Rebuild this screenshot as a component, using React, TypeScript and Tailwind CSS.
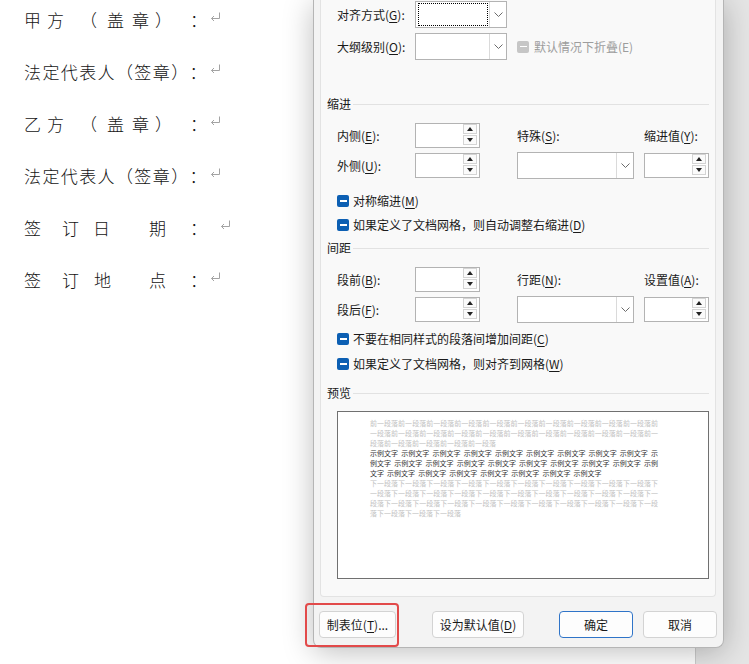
import React from "react";

const CJK = "font-['Noto_Sans_CJK_SC','Noto_Sans',sans-serif]";

function U({ children }: { children: React.ReactNode }) {
  return <span className="underline underline-offset-[2px] decoration-[1px]">{children}</span>;
}

function Ret({ className = "" }: { className?: string }) {
  return (
    <svg width="11" height="10" viewBox="0 0 11 10" className={`shrink-0 ${className}`}>
      <path d="M9.5 0.5 V6.5 H1.5" fill="none" stroke="#a3a3a3" strokeWidth="1" />
      <path d="M4 4 L1.5 6.5 L4 9" fill="none" stroke="#a3a3a3" strokeWidth="1" />
    </svg>
  );
}

function Chevron() {
  return (
    <svg width="9" height="5" viewBox="0 0 9 5">
      <path d="M0.5 0.5 L4.5 4.5 L8.5 0.5" fill="none" stroke="#6b6b6b" strokeWidth="1" />
    </svg>
  );
}

function Tri({ up }: { up?: boolean }) {
  return (
    <svg width="6" height="4" viewBox="0 0 6 4">
      {up ? <path d="M0 4 L3 0 L6 4Z" fill="#222" /> : <path d="M0 0 L3 4 L6 0Z" fill="#222" />}
    </svg>
  );
}

function Select({ w, focus }: { w: string; focus?: boolean }) {
  return (
    <div className={`flex shrink-0 h-[27px] ${w} border border-[#b3b3b3] bg-white`}>
      <div className="flex-1 pl-[2px] pr-[1px] py-[1px]">
        {focus && <div className="h-full border border-dotted border-black" />}
      </div>
      <div className="w-[17px] border-l border-[#dadada] flex items-center justify-center">
        <Chevron />
      </div>
    </div>
  );
}

function Spin() {
  return (
    <div className="flex shrink-0 h-[25px] w-[65px] border border-[#b3b3b3] bg-white">
      <div className="flex-1" />
      <div className="flex flex-col w-[14px] mr-[2px] mb-[2px] gap-[1px]">
        <div className="flex-1 border border-[#d4d4d4] bg-[#fbfbfb] flex items-center justify-center">
          <Tri up />
        </div>
        <div className="flex-1 border border-[#d4d4d4] bg-[#fbfbfb] flex items-center justify-center">
          <Tri />
        </div>
      </div>
    </div>
  );
}

function Check({ disabled }: { disabled?: boolean }) {
  return (
    <div
      className={`w-[12px] h-[12px] shrink-0 rounded-[2px] flex items-center justify-center ${
        disabled ? "bg-[#c6c6c6]" : "bg-[#0c5fb3]"
      }`}
    >
      <div className="w-[7px] h-[1.5px] bg-white" />
    </div>
  );
}

function Section({ title, mt }: { title: string; mt: string }) {
  return (
    <div className={`flex items-center h-[16px] ${mt}`}>
      <span>{title}</span>
      <div className="ml-[2px] flex-1 h-px bg-[#e2e2e2]" />
    </div>
  );
}

function CheckRow({ mt, children }: { mt: string; children: React.ReactNode }) {
  return (
    <div className={`flex items-center h-[16px] pl-[10px] gap-[4px] ${mt}`}>
      <Check />
      <span>{children}</span>
    </div>
  );
}

function Label({ children }: { children: React.ReactNode }) {
  return <div className="w-[88px] shrink-0 pl-[10px]">{children}</div>;
}

function Btn({ w, primary, children, ml = "" }: { w: string; primary?: boolean; children: React.ReactNode; ml?: string }) {
  return (
    <div
      className={`h-[27px] shrink-0 ${w} ${ml} rounded-[4px] border ${
        primary ? "border-[#2f74c8]" : "border-[#d3d3d3]"
      } bg-[#fdfdfd] flex items-center justify-center text-[12px] text-[#1a1a1a]`}
    >
      {children}
    </div>
  );
}

const prev = [
  "前一段落".repeat(10) + "前",
  "一段落前".repeat(10) + "一",
  "段落" + "前一段落".repeat(4),
];
const sample = [
  "示例文字 ".repeat(9) + "示",
  "例文字 " + "示例文字 ".repeat(8) + "示例",
  "文字 " + "示例文字 ".repeat(6) + "示例文字",
];
const next = [
  "下一段落".repeat(10) + "下",
  "一段落下".repeat(10) + "一",
  "段落下一".repeat(10) + "段",
  "落" + "下一段落".repeat(3),
];

function Preview() {
  return (
    <div className="ml-[10px] mt-[10px] w-[372px] h-[168px] border border-[#707070] bg-white pt-[6px] pl-[32px] text-[7px] leading-[10px]">
      {prev.map((t, i) => (
        <div
          key={"p" + i}
          className={`w-[288px] whitespace-nowrap text-[#c2c2c2] ${i < 2 ? "[text-align-last:justify] text-justify" : ""}`}
        >
          {t}
        </div>
      ))}
      {sample.map((t, i) => (
        <div
          key={"s" + i}
          className={`w-[288px] whitespace-nowrap text-[#333333] [word-spacing:1.5px] ${
            i < 2 ? "[text-align-last:justify] text-justify" : ""
          }`}
        >
          {t}
        </div>
      ))}
      {next.map((t, i) => (
        <div
          key={"n" + i}
          className={`w-[288px] whitespace-nowrap text-[#c2c2c2] ${i < 3 ? "[text-align-last:justify] text-justify" : ""}`}
        >
          {t}
        </div>
      ))}
    </div>
  );
}

function Ch({ c, ml = "" }: { c: string; ml?: string }) {
  return <span className={`inline-block shrink-0 w-[17px] text-center ${ml}`}>{c}</span>;
}

function Cw({ c }: { c: string }) {
  return <span className="inline-block shrink-0 w-[18.4px] text-left">{c}</span>;
}

function DocText() {
  return (
    <div className={`${CJK} text-[17px] text-[#141414] font-light pt-[4px] pl-[24px] flex flex-col gap-[20px]`}>
      <div className="flex items-center h-[32px]">
        <Ch c="甲" />
        <Ch c="方" ml="ml-[6px]" />
        <Ch c="（" ml="ml-[16px]" />
        <Ch c="盖" ml="ml-[10px]" />
        <Ch c="章" ml="ml-[8px]" />
        <Ch c="）" ml="ml-[6px]" />
        <Ch c="：" ml="ml-[18px]" />
        <Ret className="ml-[3px] -mt-[6px]" />
      </div>
      <div className="flex items-center h-[32px]">
        {"法定代表人（签章）：".split("").map((c, i) => (
          <Cw key={i} c={c} />
        ))}
        <Ret className="ml-[2px] -mt-[6px]" />
      </div>
      <div className="flex items-center h-[32px]">
        <Ch c="乙" />
        <Ch c="方" ml="ml-[6px]" />
        <Ch c="（" ml="ml-[16px]" />
        <Ch c="盖" ml="ml-[10px]" />
        <Ch c="章" ml="ml-[8px]" />
        <Ch c="）" ml="ml-[6px]" />
        <Ch c="：" ml="ml-[18px]" />
        <Ret className="ml-[3px] -mt-[6px]" />
      </div>
      <div className="flex items-center h-[32px]">
        {"法定代表人（签章）：".split("").map((c, i) => (
          <Cw key={i} c={c} />
        ))}
        <Ret className="ml-[2px] -mt-[6px]" />
      </div>
      <div className="flex items-center h-[32px]">
        <Ch c="签" />
        <Ch c="订" ml="ml-[21px]" />
        <Ch c="日" ml="ml-[14px]" />
        <Ch c="期" ml="ml-[39px]" />
        <Ch c="：" ml="ml-[24px]" />
        <Ret className="ml-[13px] -mt-[6px]" />
      </div>
      <div className="flex items-center h-[32px]">
        <Ch c="签" />
        <Ch c="订" ml="ml-[21px]" />
        <Ch c="地" ml="ml-[15px]" />
        <Ch c="点" ml="ml-[38px]" />
        <Ch c="：" ml="ml-[24px]" />
        <Ret className="ml-[3px] -mt-[6px]" />
      </div>
    </div>
  );
}

export default function App() {
  return (
    <div className="relative w-[749px] h-[664px] overflow-hidden flex bg-white">
      <div className="w-[695px] h-full bg-white">
        <DocText />
      </div>
      <div className="flex-1 h-full bg-[#e5e5e5] border-l border-[#cdcdcd]" />

      {/* dialog window */}
      <div
        className={`${CJK} absolute left-[313px] top-0 w-[411px] h-[648px] bg-[#f3f3f3] border-x border-b border-[#b5b5b5] rounded-b-[8px] shadow-[0_4px_30px_rgba(0,0,0,0.26)] pl-[6px] pr-[7px] text-[12px] text-[#1a1a1a] flex flex-col`}
      >
        <div className="h-[597px] border-x border-b border-[#e3e3e3] bg-[#f9f9f9] rounded-b-[4px] pl-[6px] pr-[6px] flex flex-col">
          <div className="flex items-center h-[27px] mt-[1px]">
            <Label>
              对齐方式(<U>G</U>):
            </Label>
            <Select w="w-[92px]" focus />
          </div>
          <div className="flex items-center h-[27px] mt-[5px]">
            <Label>
              大纲级别(<U>O</U>):
            </Label>
            <Select w="w-[92px]" />
            <div className="ml-[10px] flex items-center gap-[5px] text-[#9d9d9d]">
              <Check disabled />
              <span>默认情况下折叠(E)</span>
            </div>
          </div>

          <Section title="缩进" mt="mt-[36px]" />
          <div className="flex items-center h-[25px] mt-[11px]">
            <Label>
              内侧(<U>E</U>):
            </Label>
            <Spin />
            <div className="w-[37px] shrink-0" />
            <div className="w-[127px] shrink-0">
              特殊(<U>S</U>):
            </div>
            <div>
              缩进值(<U>Y</U>):
            </div>
          </div>
          <div className="flex items-center h-[27px] mt-[4px]">
            <Label>
              外侧(<U>U</U>):
            </Label>
            <Spin />
            <div className="w-[37px] shrink-0" />
            <Select w="w-[117px]" />
            <div className="w-[10px] shrink-0" />
            <Spin />
          </div>
          <CheckRow mt="mt-[14px]">
            对称缩进(<U>M</U>)
          </CheckRow>
          <CheckRow mt="mt-[8px]">
            如果定义了文档网格，则自动调整右缩进(<U>D</U>)
          </CheckRow>

          <Section title="间距" mt="mt-[7px]" />
          <div className="flex items-center h-[25px] mt-[11px]">
            <Label>
              段前(<U>B</U>):
            </Label>
            <Spin />
            <div className="w-[37px] shrink-0" />
            <div className="w-[127px] shrink-0">
              行距(<U>N</U>):
            </div>
            <div>
              设置值(<U>A</U>):
            </div>
          </div>
          <div className="flex items-center h-[27px] mt-[4px]">
            <Label>
              段后(<U>F</U>):
            </Label>
            <Spin />
            <div className="w-[37px] shrink-0" />
            <Select w="w-[117px]" />
            <div className="w-[10px] shrink-0" />
            <Spin />
          </div>
          <CheckRow mt="mt-[8px]">
            不要在相同样式的段落间增加间距(<U>C</U>)
          </CheckRow>
          <CheckRow mt="mt-[9px]">
            如果定义了文档网格，则对齐到网格(<U>W</U>)
          </CheckRow>

          <Section title="预览" mt="mt-[13px]" />
          <Preview />
        </div>

        <div className="flex pt-[14px]">
          <Btn w="w-[77px]" ml="ml-[-1px]">
            制表位(<U>T</U>)...
          </Btn>
          <Btn w="w-[92px]" ml="ml-[36px]">
            设为默认值(<U>D</U>)
          </Btn>
          <Btn w="w-[74px]" ml="ml-[35px]" primary>
            确定
          </Btn>
          <Btn w="w-[74px]" ml="ml-[10px]">
            取消
          </Btn>
        </div>
      </div>

      {/* red annotation box */}
      <div className="absolute left-[305px] top-[603px] w-[94px] h-[44px] border-2 border-[#e24a4a] rounded-[4px]" />
    </div>
  );
}
